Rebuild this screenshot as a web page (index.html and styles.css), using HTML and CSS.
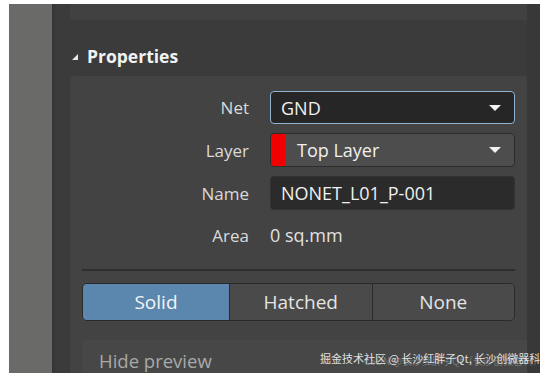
FILE: index.html
```html
<!DOCTYPE html>
<html lang="en">
<head>
    <meta charset="UTF-8">
    <meta name="viewport" content="width=device-width, initial-scale=1.0">
    <title>Properties</title>
    <link rel="stylesheet" href="styles.css">
</head>
<body>
    <div class="screen">
        <div class="sidebar"></div>
        <div class="divider"></div>
        <div class="panel">
            <div class="column">
                <div class="prev-section"></div>

                <h2 class="section-title"><span class="caret"></span>Properties</h2>

                <div class="section-body">
                    <div class="form-grid">
                        <label class="label">Net</label>
                        <div class="combo focused">
                            <span class="value">GND</span>
                            <span class="arrow"></span>
                        </div>

                        <label class="label">Layer</label>
                        <div class="combo layer">
                            <span class="swatch"></span>
                            <span class="value">Top Layer</span>
                            <span class="arrow"></span>
                        </div>

                        <label class="label">Name</label>
                        <div class="field">NONET_L01_P-001</div>

                        <label class="label">Area</label>
                        <div class="static">0 sq.mm</div>
                    </div>

                    <div class="separator"></div>

                    <div class="segmented">
                        <button class="seg active">Solid</button>
                        <button class="seg">Hatched</button>
                        <button class="seg">None</button>
                    </div>

                    <div class="preview">
                        <span class="preview-toggle">Hide preview</span>
                    </div>
                </div>
            </div>
            <div class="scroll-strip"></div>
        </div>
    </div>

    <div class="watermark">
        <span class="mark back">CSDN @长沙红胖子Qt（长沙创微智科）</span>
        <span class="mark front">掘金技术社区 @ 长沙红胖子Qt, 长沙创微器科</span>
    </div>
</body>
</html>
```

FILE: styles.css
```css
body {
    margin: 0;
    background: #ffffff;
    font-family: 'Open Sans', 'Noto Sans', sans-serif;
    color: #e2e2e2;
    overflow: hidden;
}

.screen {
    display: flex;
    height: 369px;
    margin: 4px 3px 0 9px;
    overflow: hidden;
}

.sidebar {
    width: 43px;
    background: #6a6a68;
}

.divider {
    width: 3px;
    background: #363636;
}

.panel {
    flex: 1;
    display: flex;
    background: #3b3b3b;
    padding-left: 15px;
}

.column {
    width: 457px;
    display: flex;
    flex-direction: column;
    min-height: 0;
}

.scroll-strip {
    flex: 1;
    background: #383838;
}

.prev-section {
    flex-shrink: 0;
    height: 16px;
    background: #414141;
}

.section-title {
    flex-shrink: 0;
    display: flex;
    align-items: center;
    margin: 22px 0 0 0;
    height: 28px;
    font-size: 17.5px;
    font-weight: bold;
    color: #f2f2f2;
}

.caret {
    width: 0;
    height: 0;
    margin: 2px 9px 0 2px;
    border-left: 6px solid transparent;
    border-bottom: 6px solid #e8e8e8;
}

.section-body {
    flex: 1;
    min-height: 0;
    overflow: hidden;
    margin-top: 6px;
    background: #434343;
    padding: 15px 12px 0 12px;
    border-radius: 4px 4px 0 0;
}

.form-grid {
    display: grid;
    grid-template-columns: 167px 245px;
    column-gap: 21px;
    row-gap: 9px;
    align-items: center;
}

.label {
    text-align: right;
    font-size: 17px;
    color: #dadada;
}

.combo,
.field {
    position: relative;
    display: flex;
    align-items: center;
    height: 34px;
    box-sizing: border-box;
    border-radius: 4px;
    font-size: 18px;
    color: #f0f0f0;
}

.combo {
    padding-left: 10px;
    border: 1px solid #2c2c2c;
}

.combo.focused {
    height: 33px;
    background: #262626;
    border-color: #8fb3d3;
}

.combo.layer {
    padding-left: 0;
    background: #4d4d4d;
}

.swatch {
    width: 14px;
    align-self: stretch;
    background: #f20000;
    border-radius: 3px 0 0 3px;
    margin-right: 12px;
}

.arrow {
    position: absolute;
    right: 13px;
    top: 13px;
    width: 0;
    height: 0;
    border-left: 6px solid transparent;
    border-right: 6px solid transparent;
    border-top: 6px solid #f2f2f2;
}

.field {
    padding-left: 10px;
    background: #2b2b2b;
    border: 1px solid #333333;
}

.static {
    height: 32px;
    line-height: 32px;
    font-size: 18px;
    color: #e0e0e0;
}

.separator {
    flex-shrink: 0;
    height: 2px;
    margin-top: 18px;
    background: #2e2e2e;
}

.segmented {
    display: flex;
    margin-top: 12px;
    height: 36px;
    border: 1px solid #2a2a2a;
    border-radius: 5px;
    overflow: hidden;
}

.seg {
    flex: 1;
    border: none;
    border-left: 1px solid #2a2a2a;
    background: #4a4a4a;
    color: #e4e4e4;
    font-family: inherit;
    font-size: 19px;
    padding: 0;
}

.seg:first-child {
    border-left: none;
    flex: 0 0 146px;
}

.seg.active {
    background: #5b86ad;
    color: #f4f4f4;
}

.preview {
    margin: 19px -12px 0 0;
    height: 40px;
    background: #474747;
    padding-left: 17px;
    border-radius: 4px 0 0 0;
}

.preview-toggle {
    display: block;
    padding-top: 9px;
    line-height: 24px;
    font-size: 18.5px;
    color: #a9a9a9;
}

.watermark {
    position: absolute;
    left: 320px;
    top: 350px;
    width: 222px;
    height: 20px;
    font-family: 'Noto Sans CJK SC', sans-serif;
    white-space: nowrap;
}

.mark {
    position: absolute;
    left: 0;
    top: 0;
}

.mark.back {
    left: 44px;
    top: 3px;
    font-size: 10px;
    color: rgba(200, 200, 200, 0.4);
}

.mark.front {
    font-size: 11px;
    color: rgba(255, 255, 255, 0.85);
}
```
